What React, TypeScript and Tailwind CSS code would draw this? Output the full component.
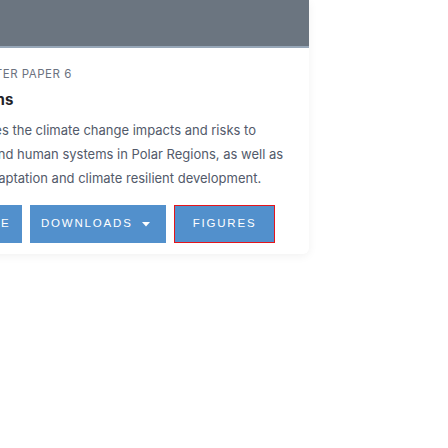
const lines = [
  'CCP6 assesses the climate change impacts and risks to',
  'ecosystems and human systems in Polar Regions, as well as',
  'options for adaptation and climate resilient development.',
];

export default function App() {
  return (
    <div className="w-[448px] h-[448px] overflow-hidden bg-white">
      <div className="ml-[-117px] w-[426px] bg-white rounded-b-md shadow-[0_2px_10px_rgba(0,0,0,0.06)]">
        <div className="h-[48px] bg-[#6b7580] border-b-2 border-[#97a7b8]"></div>
        <div className="pl-[30px] pt-[18px] pb-[11px] font-['Inter',sans-serif]">
          <div className="text-[11.5px] leading-[16px] text-[#6b7280] tracking-[0.5px]">
            CROSS-CHAPTER PAPER 6
          </div>
          <h3 className="mt-[8px] text-[15px] leading-[20px] font-bold text-[#1f2328]">Polar Regions</h3>
          <p className="mt-[8px] text-[13px] leading-[24px] text-[#525a6a] whitespace-nowrap">
            {lines.map((line, i) => (
              <span key={i} className="block">{line}</span>
            ))}
          </p>
          <div className="mt-[15px] flex gap-2 font-['Liberation_Sans',Arial,sans-serif] text-[11.5px] tracking-[1.8px] text-white">
            <button className="h-[38px] w-[109px] bg-[#5290cc]">READ MORE</button>
            <button className="h-[38px] w-[136px] bg-[#5290cc] flex items-center pl-[11px] gap-[9px]">
              DOWNLOADS
              <svg width="8" height="5" viewBox="0 0 8 5"><path d="M0 0h8L4 4.5z" fill="white" /></svg>
            </button>
            <button className="h-[38px] w-[101px] bg-[#5290cc] border border-[#e5141b]">FIGURES</button>
          </div>
        </div>
      </div>
    </div>
  );
}
